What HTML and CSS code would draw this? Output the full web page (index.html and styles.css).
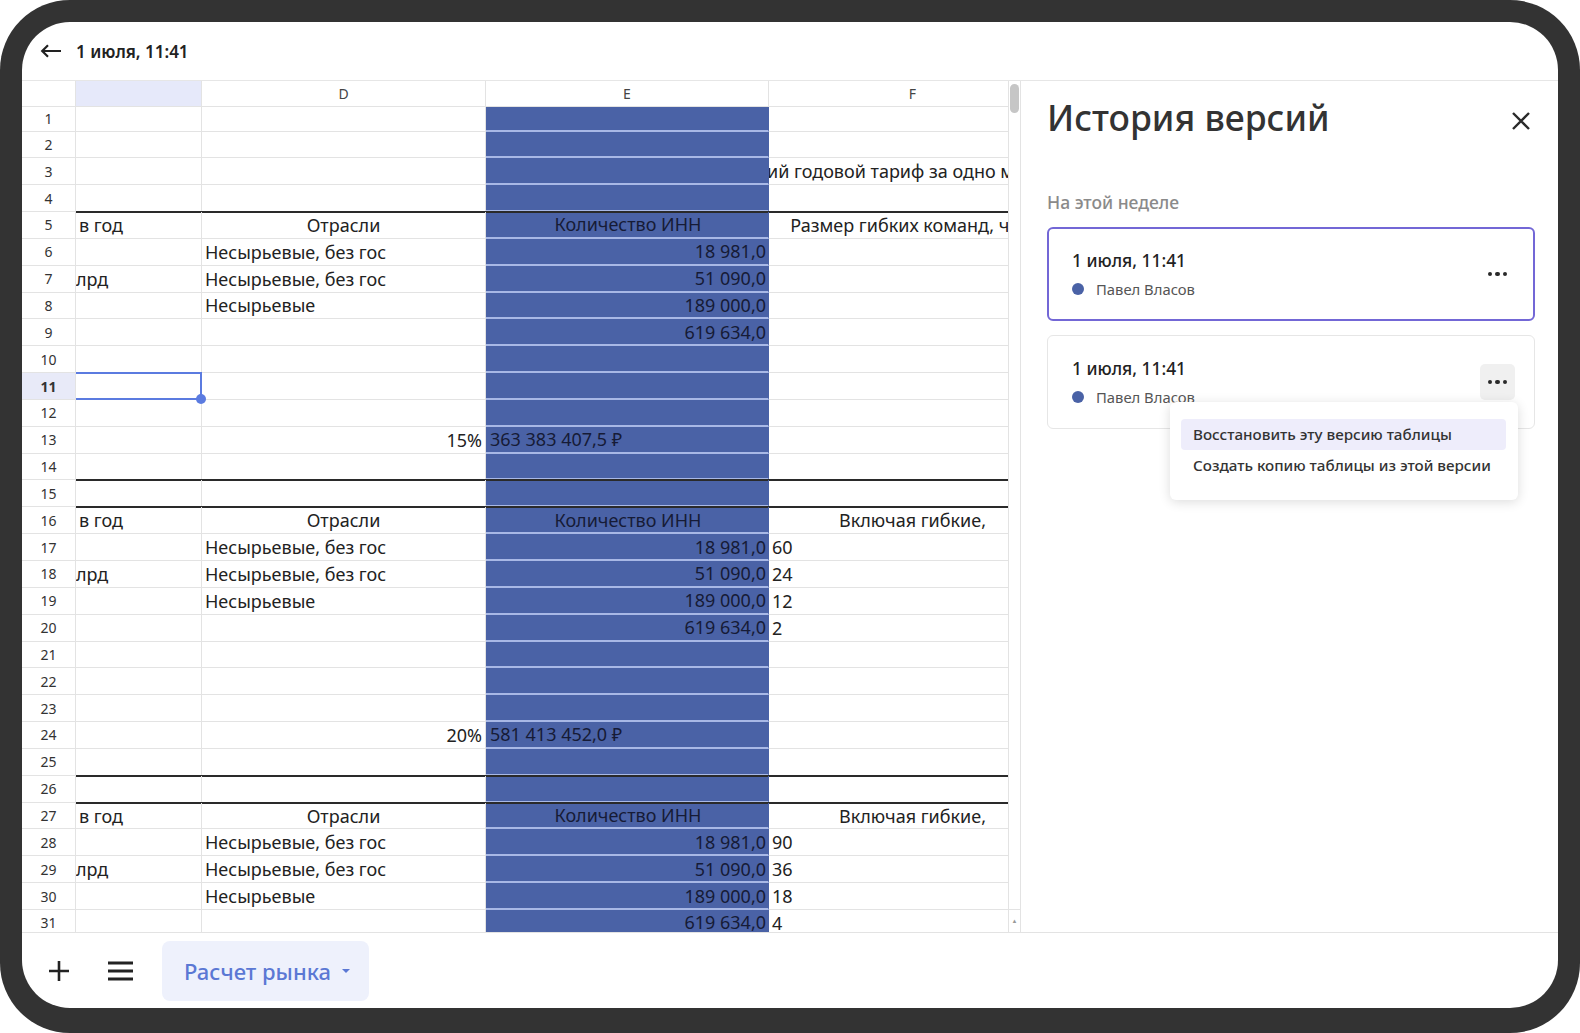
FILE: index.html
```html
<!DOCTYPE html>
<html>
<head>
    <meta charset="utf-8">
    <link rel="stylesheet" href="styles.css">
</head>
<body>
<div class="device">
    <div class="screen">

        <div class="topbar">
            <svg class="back" width="22" height="14" viewBox="0 0 22 14">
                <path d="M21 7H2.5M8 1.2L2.2 7L8 12.8" fill="none" stroke="#222" stroke-width="2.2"/>
            </svg>
            <span class="doc-title">1 июля, 11:41</span>
        </div>

        <div class="main">
            <div class="sheet">
                <div class="row head">
                    <div class="cell rh"></div>
                    <div class="cell col-sel"></div>
                    <div class="cell">D</div>
                    <div class="cell">E</div>
                    <div class="cell">F</div>
                </div>
                <div class="row first">
                    <div class="cell rh">1</div><div class="cell"></div><div class="cell"></div><div class="cell blue"></div><div class="cell"></div>
                </div>
                <div class="row">
                    <div class="cell rh">2</div><div class="cell"></div><div class="cell"></div><div class="cell blue"></div><div class="cell"></div>
                </div>
                <div class="row">
                    <div class="cell rh">3</div><div class="cell"></div><div class="cell"></div><div class="cell blue"></div><div class="cell center">Средний годовой тариф за одно место, тыс. ₽</div>
                </div>
                <div class="row">
                    <div class="cell rh">4</div><div class="cell"></div><div class="cell"></div><div class="cell blue"></div><div class="cell"></div>
                </div>
                <div class="row ruled">
                    <div class="cell rh">5</div><div class="cell">в год</div><div class="cell center">Отрасли</div><div class="cell blue center">Количество ИНН</div><div class="cell center">Размер гибких команд, чел.</div>
                </div>
                <div class="row">
                    <div class="cell rh">6</div><div class="cell"></div><div class="cell">Несырьевые, без гос</div><div class="cell blue right">18 981,0</div><div class="cell"></div>
                </div>
                <div class="row">
                    <div class="cell rh">7</div><div class="cell cut">лрд</div><div class="cell">Несырьевые, без гос</div><div class="cell blue right">51 090,0</div><div class="cell"></div>
                </div>
                <div class="row">
                    <div class="cell rh">8</div><div class="cell"></div><div class="cell">Несырьевые</div><div class="cell blue right">189 000,0</div><div class="cell"></div>
                </div>
                <div class="row">
                    <div class="cell rh">9</div><div class="cell"></div><div class="cell"></div><div class="cell blue right">619 634,0</div><div class="cell"></div>
                </div>
                <div class="row">
                    <div class="cell rh">10</div><div class="cell"></div><div class="cell"></div><div class="cell blue"></div><div class="cell"></div>
                </div>
                <div class="row">
                    <div class="cell rh active">11</div><div class="cell selected"><span class="handle"></span></div><div class="cell"></div><div class="cell blue"></div><div class="cell"></div>
                </div>
                <div class="row">
                    <div class="cell rh">12</div><div class="cell"></div><div class="cell"></div><div class="cell blue"></div><div class="cell"></div>
                </div>
                <div class="row">
                    <div class="cell rh">13</div><div class="cell"></div><div class="cell right">15%</div><div class="cell blue">363 383 407,5 ₽</div><div class="cell"></div>
                </div>
                <div class="row">
                    <div class="cell rh">14</div><div class="cell"></div><div class="cell"></div><div class="cell blue"></div><div class="cell"></div>
                </div>
                <div class="row ruled">
                    <div class="cell rh">15</div><div class="cell"></div><div class="cell"></div><div class="cell blue"></div><div class="cell"></div>
                </div>
                <div class="row ruled">
                    <div class="cell rh">16</div><div class="cell">в год</div><div class="cell center">Отрасли</div><div class="cell blue center">Количество ИНН</div><div class="cell center">Включая гибкие,</div>
                </div>
                <div class="row">
                    <div class="cell rh">17</div><div class="cell"></div><div class="cell">Несырьевые, без гос</div><div class="cell blue right">18 981,0</div><div class="cell">60</div>
                </div>
                <div class="row">
                    <div class="cell rh">18</div><div class="cell cut">лрд</div><div class="cell">Несырьевые, без гос</div><div class="cell blue right">51 090,0</div><div class="cell">24</div>
                </div>
                <div class="row">
                    <div class="cell rh">19</div><div class="cell"></div><div class="cell">Несырьевые</div><div class="cell blue right">189 000,0</div><div class="cell">12</div>
                </div>
                <div class="row">
                    <div class="cell rh">20</div><div class="cell"></div><div class="cell"></div><div class="cell blue right">619 634,0</div><div class="cell">2</div>
                </div>
                <div class="row">
                    <div class="cell rh">21</div><div class="cell"></div><div class="cell"></div><div class="cell blue"></div><div class="cell"></div>
                </div>
                <div class="row">
                    <div class="cell rh">22</div><div class="cell"></div><div class="cell"></div><div class="cell blue"></div><div class="cell"></div>
                </div>
                <div class="row">
                    <div class="cell rh">23</div><div class="cell"></div><div class="cell"></div><div class="cell blue"></div><div class="cell"></div>
                </div>
                <div class="row">
                    <div class="cell rh">24</div><div class="cell"></div><div class="cell right">20%</div><div class="cell blue">581 413 452,0 ₽</div><div class="cell"></div>
                </div>
                <div class="row">
                    <div class="cell rh">25</div><div class="cell"></div><div class="cell"></div><div class="cell blue"></div><div class="cell"></div>
                </div>
                <div class="row ruled">
                    <div class="cell rh">26</div><div class="cell"></div><div class="cell"></div><div class="cell blue"></div><div class="cell"></div>
                </div>
                <div class="row ruled">
                    <div class="cell rh">27</div><div class="cell">в год</div><div class="cell center">Отрасли</div><div class="cell blue center">Количество ИНН</div><div class="cell center">Включая гибкие,</div>
                </div>
                <div class="row">
                    <div class="cell rh">28</div><div class="cell"></div><div class="cell">Несырьевые, без гос</div><div class="cell blue right">18 981,0</div><div class="cell">90</div>
                </div>
                <div class="row">
                    <div class="cell rh">29</div><div class="cell cut">лрд</div><div class="cell">Несырьевые, без гос</div><div class="cell blue right">51 090,0</div><div class="cell">36</div>
                </div>
                <div class="row">
                    <div class="cell rh">30</div><div class="cell"></div><div class="cell">Несырьевые</div><div class="cell blue right">189 000,0</div><div class="cell">18</div>
                </div>
                <div class="row">
                    <div class="cell rh">31</div><div class="cell"></div><div class="cell"></div><div class="cell blue right">619 634,0</div><div class="cell">4</div>
                </div>
            </div>

            <div class="vscroll">
                <div class="thumb"></div>
                <div class="scroll-btn">&#9650;</div>
            </div>

            <div class="panel">
                <div class="panel-head">
                    <h1>История версий</h1>
                    <svg class="close" width="20" height="20" viewBox="0 0 20 20">
                        <path d="M2 2L18 18M18 2L2 18" stroke="#2a2a2a" stroke-width="2.4"/>
                    </svg>
                </div>

                <div class="group">На этой неделе</div>

                <div class="version current">
                    <div class="version-info">
                        <div class="version-date">1 июля, 11:41</div>
                        <div class="version-author"><span class="dot"></span>Павел Власов</div>
                    </div>
                    <div class="more"><span></span><span></span><span></span></div>
                </div>

                <div class="version">
                    <div class="version-info">
                        <div class="version-date">1 июля, 11:41</div>
                        <div class="version-author"><span class="dot"></span>Павел Власов</div>
                    </div>
                    <div class="more open"><span></span><span></span><span></span></div>

                    <div class="menu">
                        <div class="menu-item hover">Восстановить эту версию таблицы</div>
                        <div class="menu-item">Создать копию таблицы из этой версии</div>
                    </div>
                </div>
            </div>
        </div>

        <div class="bottombar">
            <svg class="tool" width="22" height="22" viewBox="0 0 22 22">
                <path d="M11 1V21M1 11H21" stroke="#222" stroke-width="2.6"/>
            </svg>
            <svg class="tool burger" width="25" height="20" viewBox="0 0 25 20">
                <path d="M0 2H25M0 10H25M0 18H25" stroke="#222" stroke-width="2.8"/>
            </svg>
            <div class="sheet-tab">
                Расчет рынка
                <svg width="10" height="6" viewBox="0 0 10 6"><path d="M1 1H9L5 5Z" fill="#5b78d4"/></svg>
            </div>
        </div>

    </div>
</div>
</body>
</html>
```

FILE: styles.css
```css
html,
body {
    margin: 0;
    background: #fff;
    font-family: "Noto Sans", "Open Sans", sans-serif;
    color: #222;
}

.device {
    width: 1580px;
    height: 1033px;
    box-sizing: border-box;
    padding: 22px 22px 25px 22px;
    background: #333;
    border-radius: 70px;
}

.screen {
    height: 100%;
    background: #fff;
    border-radius: 48px;
    overflow: hidden;
    display: flex;
    flex-direction: column;
}

/* top bar */
.topbar {
    height: 59px;
    flex: none;
    box-sizing: border-box;
    border-bottom: 1px solid #e6e6e6;
    display: flex;
    align-items: center;
    padding-left: 18px;
    gap: 14px;
}

.doc-title {
    font-size: 17px;
    font-weight: 600;
    color: #222;
}

/* sheet */
.main {
    height: 851px;
    flex: none;
    display: flex;
}

.sheet {
    width: 986px;
    flex: none;
    overflow: hidden;
}

/* column F is wider than the visible part, it runs under the panel */
.row {
    display: grid;
    grid-template-columns: 54px 126px 284px 283px 288px;
    height: 26.85px;
}

.row.head {
    height: 26px;
}

.row.first {
    height: 24.5px;
}

.cell {
    box-sizing: border-box;
    border-right: 1px solid #e3e3e3;
    border-bottom: 1px solid #e3e3e3;
    display: flex;
    align-items: center;
    padding: 0 3px;
    font-size: 18px;
    white-space: nowrap;
    overflow: hidden;
    position: relative;
}

.head .cell {
    justify-content: center;
    font-size: 14px;
    color: #444;
}

.head .col-sel {
    background: #e6e9fa;
}

.cell.rh {
    justify-content: center;
    font-size: 14px;
    color: #333;
}

.cell.rh.active {
    background: #e8eaf8;
    font-weight: 700;
}

.cell.center {
    justify-content: center;
}

.cell.right {
    justify-content: flex-end;
}

.cell.cut {
    padding-left: 0;
}

.cell.blue {
    background: #4a62a6;
    border-right-color: #4a62a6;
    border-bottom: 2px solid #a8b8e6;
    color: #161b36;
    padding: 0 2px 0 4px;
}

.ruled .cell:not(.rh) {
    box-shadow: 0 -1px 0 #2a2a2a, inset 0 1px 0 #2a2a2a;
}

.cell.selected {
    overflow: visible;
    border: 2px solid #5b7be0;
    border-left: none;
    margin-top: -1px;
    z-index: 2;
}

.handle {
    position: absolute;
    right: -6px;
    bottom: -6px;
    width: 10px;
    height: 10px;
    border-radius: 50%;
    background: #5b7be0;
}

/* scrollbar */
.vscroll {
    width: 13px;
    flex: none;
    box-sizing: border-box;
    border-left: 1px solid #e3e3e3;
    border-right: 1px solid #e3e3e3;
    display: flex;
    flex-direction: column;
    justify-content: space-between;
    align-items: center;
}

.thumb {
    margin-top: 3px;
    width: 9px;
    height: 29px;
    border-radius: 5px;
    background: #c6c6c6;
}

.scroll-btn {
    width: 100%;
    height: 22px;
    border-top: 1px solid #e3e3e3;
    font-size: 6px;
    color: #999;
    text-align: center;
    line-height: 22px;
}

/* version panel */
.panel {
    flex: 1;
    padding: 12px 23px 0 26px;
}

.panel-head {
    display: flex;
    justify-content: space-between;
    align-items: center;
    height: 48px;
}

h1 {
    margin: 0;
    font-size: 35.5px;
    font-weight: 500;
    color: #333;
}

.close {
    margin: 8px 4px 0 0;
}

.group {
    margin-top: 50px;
    font-size: 17.5px;
    line-height: 22px;
    font-weight: 500;
    color: #8a8a8a;
}

.version {
    position: relative;
    margin-top: 14px;
    height: 94px;
    box-sizing: border-box;
    border: 1px solid #e6e6e6;
    border-radius: 6px;
    display: flex;
    align-items: center;
    justify-content: space-between;
    padding: 0 19px 0 24px;
}

.version.current {
    border: 2px solid #7367d6;
    padding: 0 18px 0 23px;
}

.version-date {
    font-size: 17.4px;
    line-height: 22px;
    font-weight: 500;
    color: #222;
}

.version-author {
    margin-top: 8px;
    font-size: 14.8px;
    line-height: 20px;
    color: #555;
    display: flex;
    align-items: center;
}

.dot {
    width: 12px;
    height: 12px;
    border-radius: 50%;
    background: #4a62a6;
    margin-right: 12px;
}

.more {
    width: 35px;
    height: 36px;
    border-radius: 5px;
    display: flex;
    align-items: center;
    justify-content: center;
    gap: 3px;
}

.more span {
    width: 4.5px;
    height: 4.5px;
    border-radius: 50%;
    background: #2a2a2a;
}

.more.open {
    background: #f0f0f0;
}

.menu {
    position: absolute;
    left: 122px;
    top: 66px;
    width: 348px;
    box-sizing: border-box;
    padding: 17px 12px 19px 11px;
    background: #fff;
    border-radius: 6px;
    box-shadow: 0 2px 12px rgba(0, 0, 0, 0.14);
    z-index: 5;
}

.menu-item {
    height: 31px;
    line-height: 31px;
    padding-left: 12px;
    border-radius: 4px;
    font-size: 15.2px;
    font-weight: 500;
    color: #333;
}

.menu-item.hover {
    background: #eeedfb;
}

/* bottom bar */
.bottombar {
    flex: 1;
    box-sizing: border-box;
    border-top: 1px solid #e3e3e3;
    display: flex;
    align-items: center;
    padding-left: 26px;
}

.burger {
    margin-left: 38px;
}

.sheet-tab {
    margin-left: 29px;
    height: 60px;
    width: 207px;
    box-sizing: border-box;
    padding-left: 22px;
    border-radius: 8px;
    background: #eef1fc;
    display: flex;
    align-items: center;
    gap: 10px;
    font-size: 22px;
    font-weight: 500;
    color: #5b78d4;
}
```
